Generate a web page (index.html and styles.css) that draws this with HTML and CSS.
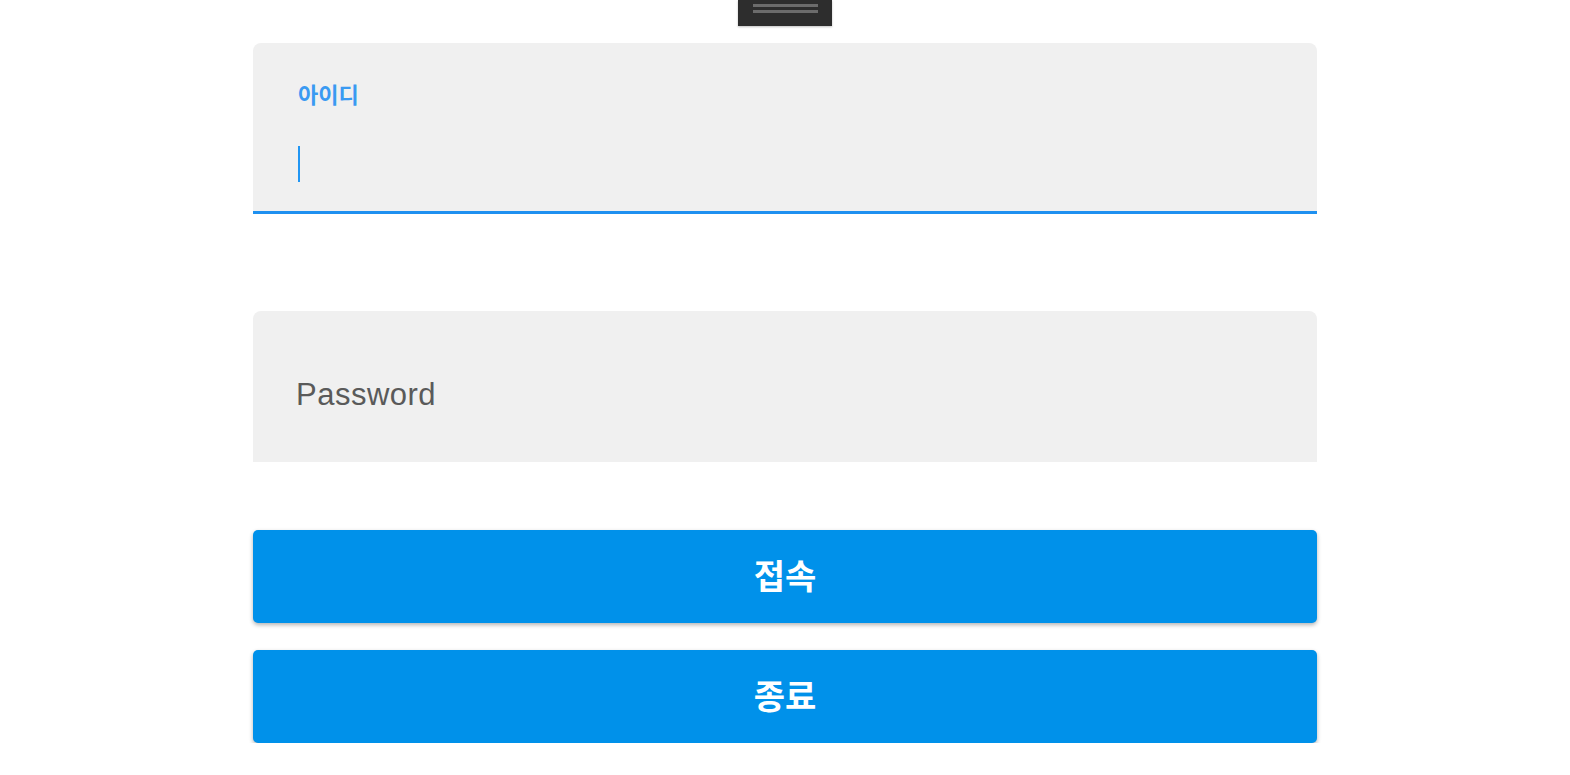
FILE: index.html
```html
<!DOCTYPE html>
<html lang="ko">
<head>
<meta charset="utf-8">
<title>Login</title>
<link rel="stylesheet" href="styles.css">
</head>
<body>
<div class="page">
  <div class="handle">
    <span class="handle-line"></span>
    <span class="handle-line"></span>
  </div>
  <form class="form">
    <div class="field field-focused">
      <label class="field-label">아이디</label>
      <span class="caret"></span>
    </div>
    <div class="field field-plain">
      <span class="placeholder">Password</span>
    </div>
    <div class="buttons">
      <button type="button" class="btn">접속</button>
      <button type="button" class="btn">종료</button>
    </div>
  </form>
</div>
</body>
</html>
```
FILE: styles.css
```css
html, body {
  margin: 0;
  padding: 0;
  background: #ffffff;
}
body {
  font-family: "Liberation Sans", "Noto Sans CJK KR", sans-serif;
}
.page {
  display: flex;
  flex-direction: column;
  align-items: center;
  width: 1570px;
}
.handle {
  width: 94px;
  height: 26px;
  background: #2d2d2d;
  box-sizing: border-box;
  padding: 4px 14px 0 15px;
  display: flex;
  flex-direction: column;
  gap: 3px;
  box-shadow: 0 1px 2px rgba(0,0,0,0.25);
}
.handle-line {
  display: block;
  height: 3px;
  background: #6b6b6b;
}
.form {
  margin-top: 17px;
  width: 1064px;
  display: flex;
  flex-direction: column;
}
.field {
  background: #f0f0f0;
  border-radius: 8px 8px 0 0;
  box-sizing: border-box;
  padding-left: 45px;
  display: flex;
  flex-direction: column;
  align-items: flex-start;
}
.field-focused {
  height: 171px;
  border-bottom: 3px solid #1e90f0;
  padding-top: 37px;
}
.field-label {
  font-family: "Noto Sans CJK KR", sans-serif;
  font-weight: 700;
  font-size: 22px;
  line-height: 26px;
  color: #3a9af2;
}
.caret {
  display: block;
  margin-top: 40px;
  width: 2px;
  height: 36px;
  background: #2196f3;
}
.field-plain {
  margin-top: 97px;
  height: 151px;
  padding-top: 66px;
  padding-left: 43px;
}
.placeholder {
  font-size: 31px;
  line-height: 36px;
  color: #5a5a5a;
  letter-spacing: 0.5px;
}
.buttons {
  margin-top: 68px;
  display: flex;
  flex-direction: column;
  gap: 27px;
}
.btn {
  height: 93px;
  border: none;
  border-radius: 5px;
  background: #0091ea;
  color: #ffffff;
  font-family: "Noto Sans CJK KR", sans-serif;
  font-weight: 700;
  font-size: 34px;
  box-shadow: 0 2px 4px rgba(0,0,0,0.3);
  padding: 0 0 4px 0;
  cursor: pointer;
}
```
